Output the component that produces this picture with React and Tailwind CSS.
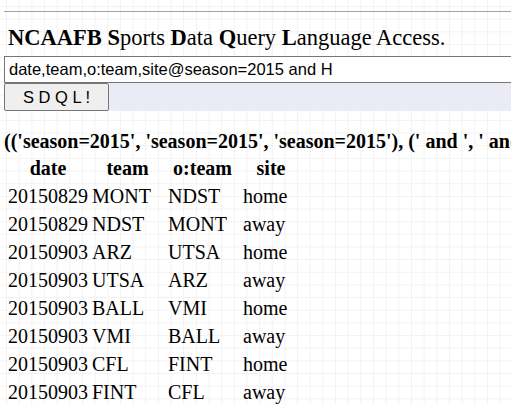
import React from "react";

const rows = [
  ["20150829", "MONT", "NDST", "home"],
  ["20150829", "NDST", "MONT", "away"],
  ["20150903", "ARZ", "UTSA", "home"],
  ["20150903", "UTSA", "ARZ", "away"],
  ["20150903", "BALL", "VMI", "home"],
  ["20150903", "VMI", "BALL", "away"],
  ["20150903", "CFL", "FINT", "home"],
  ["20150903", "FINT", "CFL", "away"],
];

export default function App() {
  return (
    <div className="w-[511px] h-[405px] overflow-hidden bg-white [background-image:linear-gradient(#f2f2f2_1px,transparent_1px),linear-gradient(90deg,#f2f2f2_1px,transparent_1px)] [background-size:12.667px_12.667px] [background-position:6px_6px] text-black font-['Liberation_Serif',serif]">
      <div className="pl-[4px] flex flex-col">
        <div className="mt-[11px] h-px w-[600px] bg-[#a0a0a0]" />
        <div className="mt-[12.5px] pl-[4px] text-[22.5px] leading-[26px] whitespace-nowrap">
          <b>NCAAFB</b> <b>S</b>ports <b>D</b>ata <b>Q</b>uery <b>L</b>anguage Access.
        </div>
        <input
          readOnly
          defaultValue="date,team,o:team,site@season=2015 and H"
          className="mt-[5.5px] w-[600px] h-[27px] border border-[#767676] bg-white px-[4px] text-[16.5px] font-['Liberation_Sans',Arial,sans-serif] text-black outline-none"
        />
        <div className="h-[28px] w-[600px] bg-[#ebebf6] flex">
          <button className="h-[28px] w-[105px] bg-[#efefef] border border-[#767676] rounded-[2px] text-[16.5px] font-['Liberation_Sans',Arial,sans-serif] text-black">
            S D Q L !
          </button>
        </div>
        <div className="mt-[18.75px] text-[20px] leading-[23px] font-bold whitespace-nowrap">
          (('season=2015', 'season=2015', 'season=2015'), (' and ', ' and '), ('H', 'H'))
        </div>
        <div className="ml-[2px] mt-[4px] grid grid-cols-[84px_75px_75px_62px] text-[20px]">
          <div className="h-[25px] leading-[23px] font-bold text-center">date</div>
          <div className="h-[25px] leading-[23px] font-bold text-center">team</div>
          <div className="h-[25px] leading-[23px] font-bold text-center">o:team</div>
          <div className="h-[25px] leading-[23px] font-bold text-center">site</div>
          {rows.map((r, i) => (
            <React.Fragment key={i}>
              <div className="h-[28px] leading-[28px] pl-[2px] whitespace-nowrap">{r[0]}</div>
              <div className="h-[28px] leading-[28px] pl-[2px] whitespace-nowrap">{r[1]}</div>
              <div className="h-[28px] leading-[28px] pl-[3px] whitespace-nowrap">{r[2]}</div>
              <div className="h-[28px] leading-[28px] pl-[3px] whitespace-nowrap">{r[3]}</div>
            </React.Fragment>
          ))}
        </div>
      </div>
    </div>
  );
}
